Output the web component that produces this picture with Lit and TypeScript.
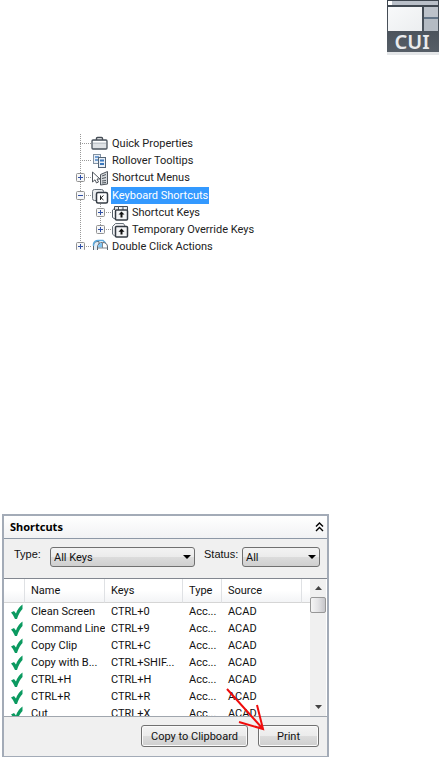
import { LitElement, html, css, svg, nothing, TemplateResult } from "lit";
import { customElement } from "lit/decorators.js";

type IconName = "toolbox" | "tooltips" | "menus" | "keyboard" | "keys" | "override" | "mouse";

interface TreeNode {
  label: string;
  icon: IconName;
  expandable?: boolean;
  selected?: boolean;
  children?: TreeNode[];
}

const TREE: TreeNode[] = [
  { label: "Quick Properties", icon: "toolbox" },
  { label: "Rollover Tooltips", icon: "tooltips" },
  { label: "Shortcut Menus", icon: "menus", expandable: true },
  {
    label: "Keyboard Shortcuts",
    icon: "keyboard",
    expandable: true,
    selected: true,
    children: [
      { label: "Shortcut Keys", icon: "keys", expandable: true },
      { label: "Temporary Override Keys", icon: "override", expandable: true },
    ],
  },
  { label: "Double Click Actions", icon: "mouse", expandable: true },
];

const ROWS: [string, string][] = [
  ["Clean Screen", "CTRL+0"],
  ["Command Line", "CTRL+9"],
  ["Copy Clip", "CTRL+C"],
  ["Copy with B...", "CTRL+SHIF..."],
  ["CTRL+H", "CTRL+H"],
  ["CTRL+R", "CTRL+R"],
  ["Cut", "CTRL+X"],
];

const ICONS: Record<IconName, TemplateResult> = {
  toolbox: svg`
    <path d="M5.500 4V2.500Q5.500 1.500 6.500 1.500H10.500Q11.500 1.500 11.500 2.500V4" fill="none" stroke="#444c55" stroke-width="1.400"/>
    <rect x="1" y="4" width="15" height="9" rx="1" fill="#dfe2e5" stroke="#4b535c" stroke-width="1.300"/>
    <path d="M2 5.500H15" stroke="#fff"/>
    <path d="M2 7.500H15" stroke="#c3c8cd"/>`,
  tooltips: svg`
    <rect x="2.500" y="1.500" width="7" height="9" fill="#e9eff6" stroke="#8292a3"/>
    <path d="M4 4H8M4 7H8" stroke="#4c86c8" stroke-width="1.500"/>
    <rect x="7.500" y="4.500" width="7" height="10" fill="#e9eff6" stroke="#536476"/>
    <path d="M9 7.500H13M9 11H13" stroke="#3a78bd" stroke-width="1.800"/>`,
  menus: svg`
    <path d="M1.500 2V12L4 9.800L5.500 13L7.500 12L6 9H9Z" fill="#fff" stroke="#50565d"/>
    <path d="M9.500 4.500L16.500 1.500V14L9.500 15Z" fill="#d5d9dc" stroke="#50565d"/>
    <path d="M11 6L15 4.500M11 8.500L15 7.500M11 11L15 10.500M11 13L15 12.500" stroke="#50565d"/>`,
  keyboard: svg`
    <rect x="1.500" y="1.500" width="11" height="11" rx="2" fill="#e9ebed" stroke="#69727b"/>
    <rect x="5.500" y="4.500" width="11" height="10.500" rx="1.500" fill="#fff" stroke="#343b43" stroke-width="1.500"/>
    <path d="M9.500 7.500V12M12.500 7.500L10 9.800L12.500 12" stroke="#222" fill="none"/>`,
  keys: svg`
    <path d="M4 14L1.500 12.500V5L4 3" fill="none" stroke="#555e67"/>
    <path d="M3.500 5V1.500H7.500V5M7.500 1.500H12V5M12 1.500H16.500V5" fill="#e4e6e8" stroke="#454d56"/>
    <rect x="4.500" y="5" width="12" height="10" rx="1" fill="#f4f5f6" stroke="#343b43" stroke-width="1.500"/>
    <path d="M10.500 6.500L13.500 9.500H11.500V12.500H9.500V9.500H7.500Z" fill="#111"/>`,
  override: svg`
    <path d="M5 14H3.500L1.500 12V4.500L4.500 1.500H12.500L14 4" fill="#f0f1f3" stroke="#69727b"/>
    <rect x="4.500" y="4.500" width="12" height="10.500" rx="1" fill="#f4f5f6" stroke="#343b43" stroke-width="1.500"/>
    <path d="M10.500 6.500L13.500 9.800H11.500V12.500H9.500V9.800H7.500Z" fill="#111"/>`,
  mouse: svg`
    <path d="M2.500 16V6Q2.500 2.500 6 2.500H8V16Z" fill="#e3edf5" stroke="#5c6670"/>
    <path d="M2.500 7V5Q3.500 1.500 7 1.500H12L14.500 4" fill="none" stroke="#5aa9de" stroke-width="1.400"/>
    <path d="M6.500 16V8Q7 3.500 11.500 3.500Q16.500 3.500 16.500 8V16Z" fill="#fff" stroke="#5c6670"/>
    <path d="M7 8.500Q7 4 11 4V8.500Z" fill="#7cc3f2"/>
    <path d="M7 9H16M11.500 4V9" stroke="#7d8790"/>`,
};

@customElement("cui-logo")
export class CuiLogo extends LitElement {
  static styles = css`
    :host {
      display: block;
    }
    svg {
      display: block;
    }
    .text {
      font: 600 20px "Noto Sans", "Open Sans", sans-serif;
      fill: #e9ebed;
    }
  `;
  render() {
    return html`<svg width="54" height="56" viewBox="0 0 54 56" role="img" aria-label="CUI">
      <defs>
        <linearGradient id="base" x1="0" y1="0" x2="0" y2="1">
          <stop offset="0" stop-color="#3c444d" />
          <stop offset="1" stop-color="#565e67" />
        </linearGradient>
        <linearGradient id="pane" x1="0" y1="0" x2="1" y2="1">
          <stop offset="0" stop-color="#f8f9fa" />
          <stop offset="1" stop-color="#eceef0" />
        </linearGradient>
      </defs>
      <rect x="0" y="52" width="52" height="3" fill="#e4e6e8" />
      <rect x="0" y="0" width="52" height="52" fill="url(#base)" />
      <rect x="1" y="1" width="50" height="4" fill="#b9bfc8" />
      <rect x="1" y="1" width="4" height="4" fill="#fff" />
      <rect x="1" y="7" width="34" height="24" fill="url(#pane)" />
      <rect x="37" y="7" width="14" height="10" fill="#bcc2ca" />
      <rect x="37" y="17" width="14" height="2" fill="#627487" />
      <rect x="37" y="19" width="14" height="12" fill="#b4bbc3" />
      <text class="text" x="25" y="49" text-anchor="middle">CUI</text>
    </svg>`;
  }
}

@customElement("cui-tree")
export class CuiTree extends LitElement {
  static styles = css`
    :host {
      display: block;
      font: 11px/17px Roboto, "Liberation Sans", sans-serif;
      color: #222;
    }
    ul {
      list-style: none;
      margin: 0;
      padding: 1px 0 0;
      background: repeating-linear-gradient(#999 0 1px, #fff 1px 2px) 4px 0 / 1px 100% no-repeat;
    }
    .children {
      margin-left: 20px;
      padding: 0;
      background-size: 1px 26px;
    }
    .group {
      margin: 1px 0 0;
    }
    .row {
      display: flex;
      align-items: center;
      height: 17px;
      white-space: nowrap;
    }
    .lead {
      width: 9px;
      height: 9px;
      flex: none;
      padding: 0;
      border: 0;
      background: none;
    }
    .line {
      background: repeating-linear-gradient(90deg, #999 0 1px, #fff 1px 2px) 4px 4px / 5px 1px no-repeat;
    }
    .lead svg {
      display: block;
    }
    .dash {
      width: 6px;
      height: 1px;
      flex: none;
      background: repeating-linear-gradient(90deg, #fff 0 1px, #999 1px 2px);
    }
    .icon {
      flex: none;
    }
    .label {
      margin-left: 2px;
      padding: 0 1px;
    }
    .selected {
      background: #3399ff;
      color: #fff;
    }
  `;

  private node(n: TreeNode): TemplateResult {
    return html`<li class=${n.children ? "group" : "leaf"}>
      <div class="row">
        ${n.expandable
          ? html`<button class="lead" aria-label="${n.children ? "Collapse" : "Expand"} ${n.label}">
              <svg width="9" height="9" viewBox="0 0 9 9">
                <rect x=".5" y=".5" width="8" height="8" rx="1" fill="#f6f7f8" stroke="#929292" />
                <path d=${n.children ? "M2 4.500H7" : "M2 4.500H7M4.500 2V7"} stroke="#2f4fa5" />
              </svg>
            </button>`
          : html`<span class="lead line"></span>`}
        <span class="dash"></span>
        <svg class="icon" width="18" height="16" viewBox="0 0 18 16" aria-hidden="true">${ICONS[n.icon]}</svg>
        <span class="label ${n.selected ? "selected" : ""}">${n.label}</span>
      </div>
      ${n.children ? html`<ul class="children">${n.children.map((c) => this.node(c))}</ul>` : nothing}
    </li>`;
  }

  render() {
    return html`<ul>${TREE.map((n) => this.node(n))}</ul>`;
  }
}

@customElement("shortcuts-panel")
export class ShortcutsPanel extends LitElement {
  static styles = css`
    :host {
      display: block;
      position: relative;
      box-sizing: border-box;
      border: 2px solid #a3abb7;
      border-bottom-width: 1px;
      background: #f0f0f0;
      font: 11px/17px Roboto, "Liberation Sans", sans-serif;
      color: #111;
    }
    button,
    select {
      font: inherit;
      color: inherit;
    }
    .title {
      display: flex;
      align-items: center;
      justify-content: space-between;
      height: 22px;
      padding: 0 3px 0 6px;
      border-bottom: 1px solid #8d98a6;
      background: linear-gradient(#fff, #f1f2f4);
    }
    h2 {
      margin: 0;
      font: bold 11px/16px "Noto Sans", "Open Sans", sans-serif;
      color: #000;
    }
    .collapse {
      padding: 0;
      border: 0;
      background: none;
      height: 10px;
    }
    svg {
      display: block;
    }
    .filters {
      display: flex;
      align-items: flex-start;
      padding: 8px 7px 11px 10px;
    }
    .filters label {
      font-family: "Liberation Sans", Arial, sans-serif;
      line-height: 14px;
    }
    .type {
      width: 36px;
    }
    .status {
      width: 38px;
      margin-left: 9px;
    }
    .combo {
      display: grid;
      align-items: center;
    }
    .wide {
      flex: 145;
    }
    .narrow {
      flex: 78;
    }
    .combo > * {
      grid-area: 1 / 1;
    }
    .combo svg {
      justify-self: end;
      margin-right: 4px;
      pointer-events: none;
    }
    select {
      appearance: none;
      width: 100%;
      height: 20px;
      padding: 0 3px;
      border: 1px solid #707070;
      border-radius: 3px;
    }
    select,
    .action {
      background: linear-gradient(#f3f3f3, #ebebeb 50%, #dcdcdc 50%, #cfcfcf);
    }
    .list {
      display: flex;
      height: 137px;
      overflow: hidden;
      border-top: 1px solid #828790;
      border-bottom: 1px solid #a0a6ae;
      background: #fff;
    }
    .view {
      flex: 1;
      min-width: 0;
    }
    table {
      width: 100%;
      table-layout: fixed;
      border-collapse: separate;
      border-spacing: 0;
    }
    .c-mark {
      width: 21px;
    }
    .c-name {
      width: 80px;
    }
    .c-keys {
      width: 78px;
    }
    .c-type {
      width: 39px;
    }
    .c-end {
      width: 8px;
    }
    th,
    td {
      box-sizing: border-box;
      height: 17px;
      padding: 0 0 0 6px;
      text-align: left;
      font-weight: normal;
      white-space: nowrap;
      overflow: hidden;
    }
    th {
      height: 24px;
      border-right: 1px solid #dfe1e4;
      border-bottom: 1px solid #d5d5d5;
      background: linear-gradient(#fff 50%, #f3f4f6);
    }
    th:last-child {
      border-right: 0;
    }
    .scroll {
      display: flex;
      flex-direction: column;
      width: 16px;
      margin-right: 1px;
      background: #f0f0f0;
    }
    .scroll button {
      display: grid;
      place-items: center;
      height: 18px;
      padding: 0;
      border: 0;
      background: none;
    }
    .thumb {
      height: 14px;
      border: 1px solid #979797;
      border-radius: 2px;
      background: linear-gradient(90deg, #f5f5f5, #e3e3e5 50%, #c6c6ca);
    }
    .track {
      flex: 1;
    }
    .actions {
      display: flex;
      justify-content: flex-end;
      gap: 10px;
      padding: 8px 8px 9px;
    }
    .action {
      height: 22px;
      padding: 0;
      border: 1px solid #707070;
      border-radius: 3px;
      box-shadow: inset 0 0 0 1px #fafafa;
    }
    .copy {
      width: 107px;
    }
    .print {
      width: 61px;
    }
    .arrow {
      position: absolute;
      right: 60px;
      bottom: 23px;
      pointer-events: none;
    }
  `;

  private drop() {
    return html`<svg width="8" height="4" viewBox="0 0 8 4" aria-hidden="true"><path d="M0 0H8L4 4Z" fill="#000" /></svg>`;
  }

  render() {
    return html`
      <div class="title">
        <h2>Shortcuts</h2>
        <button class="collapse" aria-label="Collapse">
          <svg width="9" height="10" viewBox="0 0 9 10">
            <path d="M1 4.500L4.500 1L8 4.500M1 9L4.500 5.500L8 9" fill="none" stroke="#000" stroke-width="1.400" />
          </svg>
        </button>
      </div>
      <div class="filters">
        <label class="type" for="type">Type:</label>
        <div class="combo wide">
          <select id="type"><option>All Keys</option></select>${this.drop()}
        </div>
        <label class="status" for="status">Status:</label>
        <div class="combo narrow">
          <select id="status"><option>All</option></select>${this.drop()}
        </div>
      </div>
      <div class="list">
        <div class="view">
          <table>
            <colgroup>
              <col class="c-mark" /><col class="c-name" /><col class="c-keys" /><col class="c-type" /><col /><col class="c-end" />
            </colgroup>
            <thead>
              <tr><th></th><th>Name</th><th>Keys</th><th>Type</th><th>Source</th><th></th></tr>
            </thead>
            <tbody>
              ${ROWS.map(
                ([name, keys]) => html`<tr>
                  <td>
                    <svg width="14" height="16" viewBox="0 0 14 16" role="img" aria-label="Active">
                      <path d="M1 8.500L4 7L6 9.500Q8 3.500 12.500 .5V5Q9 8.500 7 15H5Q3.500 11 1 8.500Z" fill="#0b9a60" />
                    </svg>
                  </td>
                  <td>${name}</td>
                  <td>${keys}</td>
                  <td>Acc...</td>
                  <td>ACAD</td>
                  <td></td>
                </tr>`
              )}
            </tbody>
          </table>
        </div>
        <div class="scroll">
          <button aria-label="Scroll up">
            <svg width="7" height="4" viewBox="0 0 7 4"><path d="M0 4H7L3.500 0Z" fill="#444" /></svg>
          </button>
          <div class="thumb"></div>
          <div class="track"></div>
          <button aria-label="Scroll down">
            <svg width="7" height="4" viewBox="0 0 7 4"><path d="M0 0H7L3.500 4Z" fill="#444" /></svg>
          </button>
        </div>
      </div>
      <div class="actions">
        <button class="action copy">Copy to Clipboard</button>
        <button class="action print">Print</button>
      </div>
      <svg class="arrow" width="42" height="46" viewBox="0 0 42 46" aria-hidden="true">
        <path d="M2 2L38 42M32 18L38 42L14 35" fill="none" stroke="#f00c0c" stroke-width="2" />
      </svg>
    `;
  }
}

@customElement("app-root")
export class AppRoot extends LitElement {
  static styles = css`
    :host {
      display: block;
      background: #fff;
    }
    .top {
      display: flex;
      justify-content: flex-end;
      padding-bottom: 78px;
    }
    .tree {
      height: 116px;
      margin: 0 0 264px 76px;
      overflow: hidden;
    }
    .panel {
      max-width: 327px;
      margin-left: 2px;
    }
  `;
  render() {
    return html`
      <header class="top"><cui-logo></cui-logo></header>
      <cui-tree class="tree"></cui-tree>
      <shortcuts-panel class="panel"></shortcuts-panel>
    `;
  }
}
